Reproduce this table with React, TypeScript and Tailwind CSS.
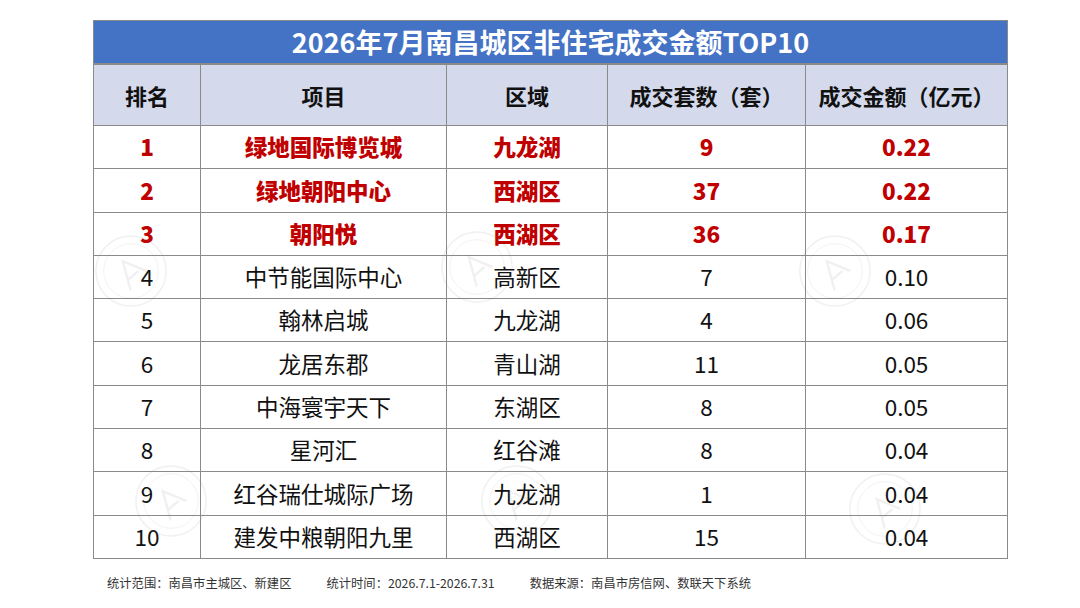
import React from "react";

type Row = {
  rank: string;
  name: string;
  area: string;
  units: string;
  amount: string;
  top?: boolean;
};

const rows: Row[] = [
  { rank: "1", name: "绿地国际博览城", area: "九龙湖", units: "9", amount: "0.22", top: true },
  { rank: "2", name: "绿地朝阳中心", area: "西湖区", units: "37", amount: "0.22", top: true },
  { rank: "3", name: "朝阳悦", area: "西湖区", units: "36", amount: "0.17", top: true },
  { rank: "4", name: "中节能国际中心", area: "高新区", units: "7", amount: "0.10" },
  { rank: "5", name: "翰林启城", area: "九龙湖", units: "4", amount: "0.06" },
  { rank: "6", name: "龙居东郡", area: "青山湖", units: "11", amount: "0.05" },
  { rank: "7", name: "中海寰宇天下", area: "东湖区", units: "8", amount: "0.05" },
  { rank: "8", name: "星河汇", area: "红谷滩", units: "8", amount: "0.04" },
  { rank: "9", name: "红谷瑞仕城际广场", area: "九龙湖", units: "1", amount: "0.04" },
  { rank: "10", name: "建发中粮朝阳九里", area: "西湖区", units: "15", amount: "0.04" },
];

const headers = ["排名", "项目", "区域", "成交套数（套）", "成交金额（亿元）"];
const widths = ["w-[107px]", "w-[246px]", "w-[161px]", "w-[198px]", "w-[202px]"];

// 淡色水印圆章
const Stamp = ({ className }: { className: string }) => (
  <svg viewBox="0 0 80 80" className={`absolute w-[78px] h-[78px] opacity-[0.1] pointer-events-none ${className}`}>
    <circle cx="40" cy="40" r="36" fill="none" stroke="#777" strokeWidth="1.5" />
    <circle cx="40" cy="40" r="28" fill="none" stroke="#777" strokeWidth="0.8" />
    <path d="M27 55 L40 27 L52 50 M32 45 L46 45" fill="none" stroke="#777" strokeWidth="2.4" transform="rotate(-40 40 40)" />
  </svg>
);

export default function App() {
  return (
    <div className="w-[1080px] h-[608px] bg-white font-['Noto_Sans_CJK_SC','Noto_Sans',sans-serif] relative overflow-hidden">
      <div className="pt-[20px] pl-[93px]">
        <div className="w-[915px] h-[44px] bg-[#4472C4] border border-[#8a8a8a] text-white font-bold text-[27px] flex items-center justify-center">
          2026年7月南昌城区非住宅成交金额TOP10
        </div>
        <table className="border-collapse table-fixed w-[915px]">
          <thead>
            <tr className="h-[61px] bg-[#D4DAEC]">
              {headers.map((h, i) => (
                <th key={h} className={`${widths[i]} border border-[#8a8a8a] text-[22px] font-bold text-[#111] text-center`}>
                  {h}
                </th>
              ))}
            </tr>
          </thead>
          <tbody>
            {rows.map((r) => {
              const cell = `border border-[#8a8a8a] text-center text-[22.5px] ${
                r.top ? "text-[#C00000] font-black" : "text-[#111]"
              }`;
              return (
                <tr key={r.rank} className="h-[43.3px]">
                  <td className={cell}>{r.rank}</td>
                  <td className={cell}>{r.name}</td>
                  <td className={cell}>{r.area}</td>
                  <td className={cell}>{r.units}</td>
                  <td className={cell}>{r.amount}</td>
                </tr>
              );
            })}
          </tbody>
        </table>
        <div className="flex gap-[35px] mt-[15px] ml-[14px] text-[12.3px] text-[#333]">
          <span>统计范围：南昌市主城区、新建区</span>
          <span>统计时间：2026.7.1-2026.7.31</span>
          <span>数据来源：南昌市房信网、数联天下系统</span>
        </div>
      </div>

      <Stamp className="left-[92px] top-[232px]" />
      <Stamp className="left-[438px] top-[228px]" />
      <Stamp className="left-[796px] top-[232px]" />
      <Stamp className="left-[132px] top-[462px]" />
      <Stamp className="left-[478px] top-[462px]" />
      <Stamp className="left-[846px] top-[470px]" />
    </div>
  );
}
